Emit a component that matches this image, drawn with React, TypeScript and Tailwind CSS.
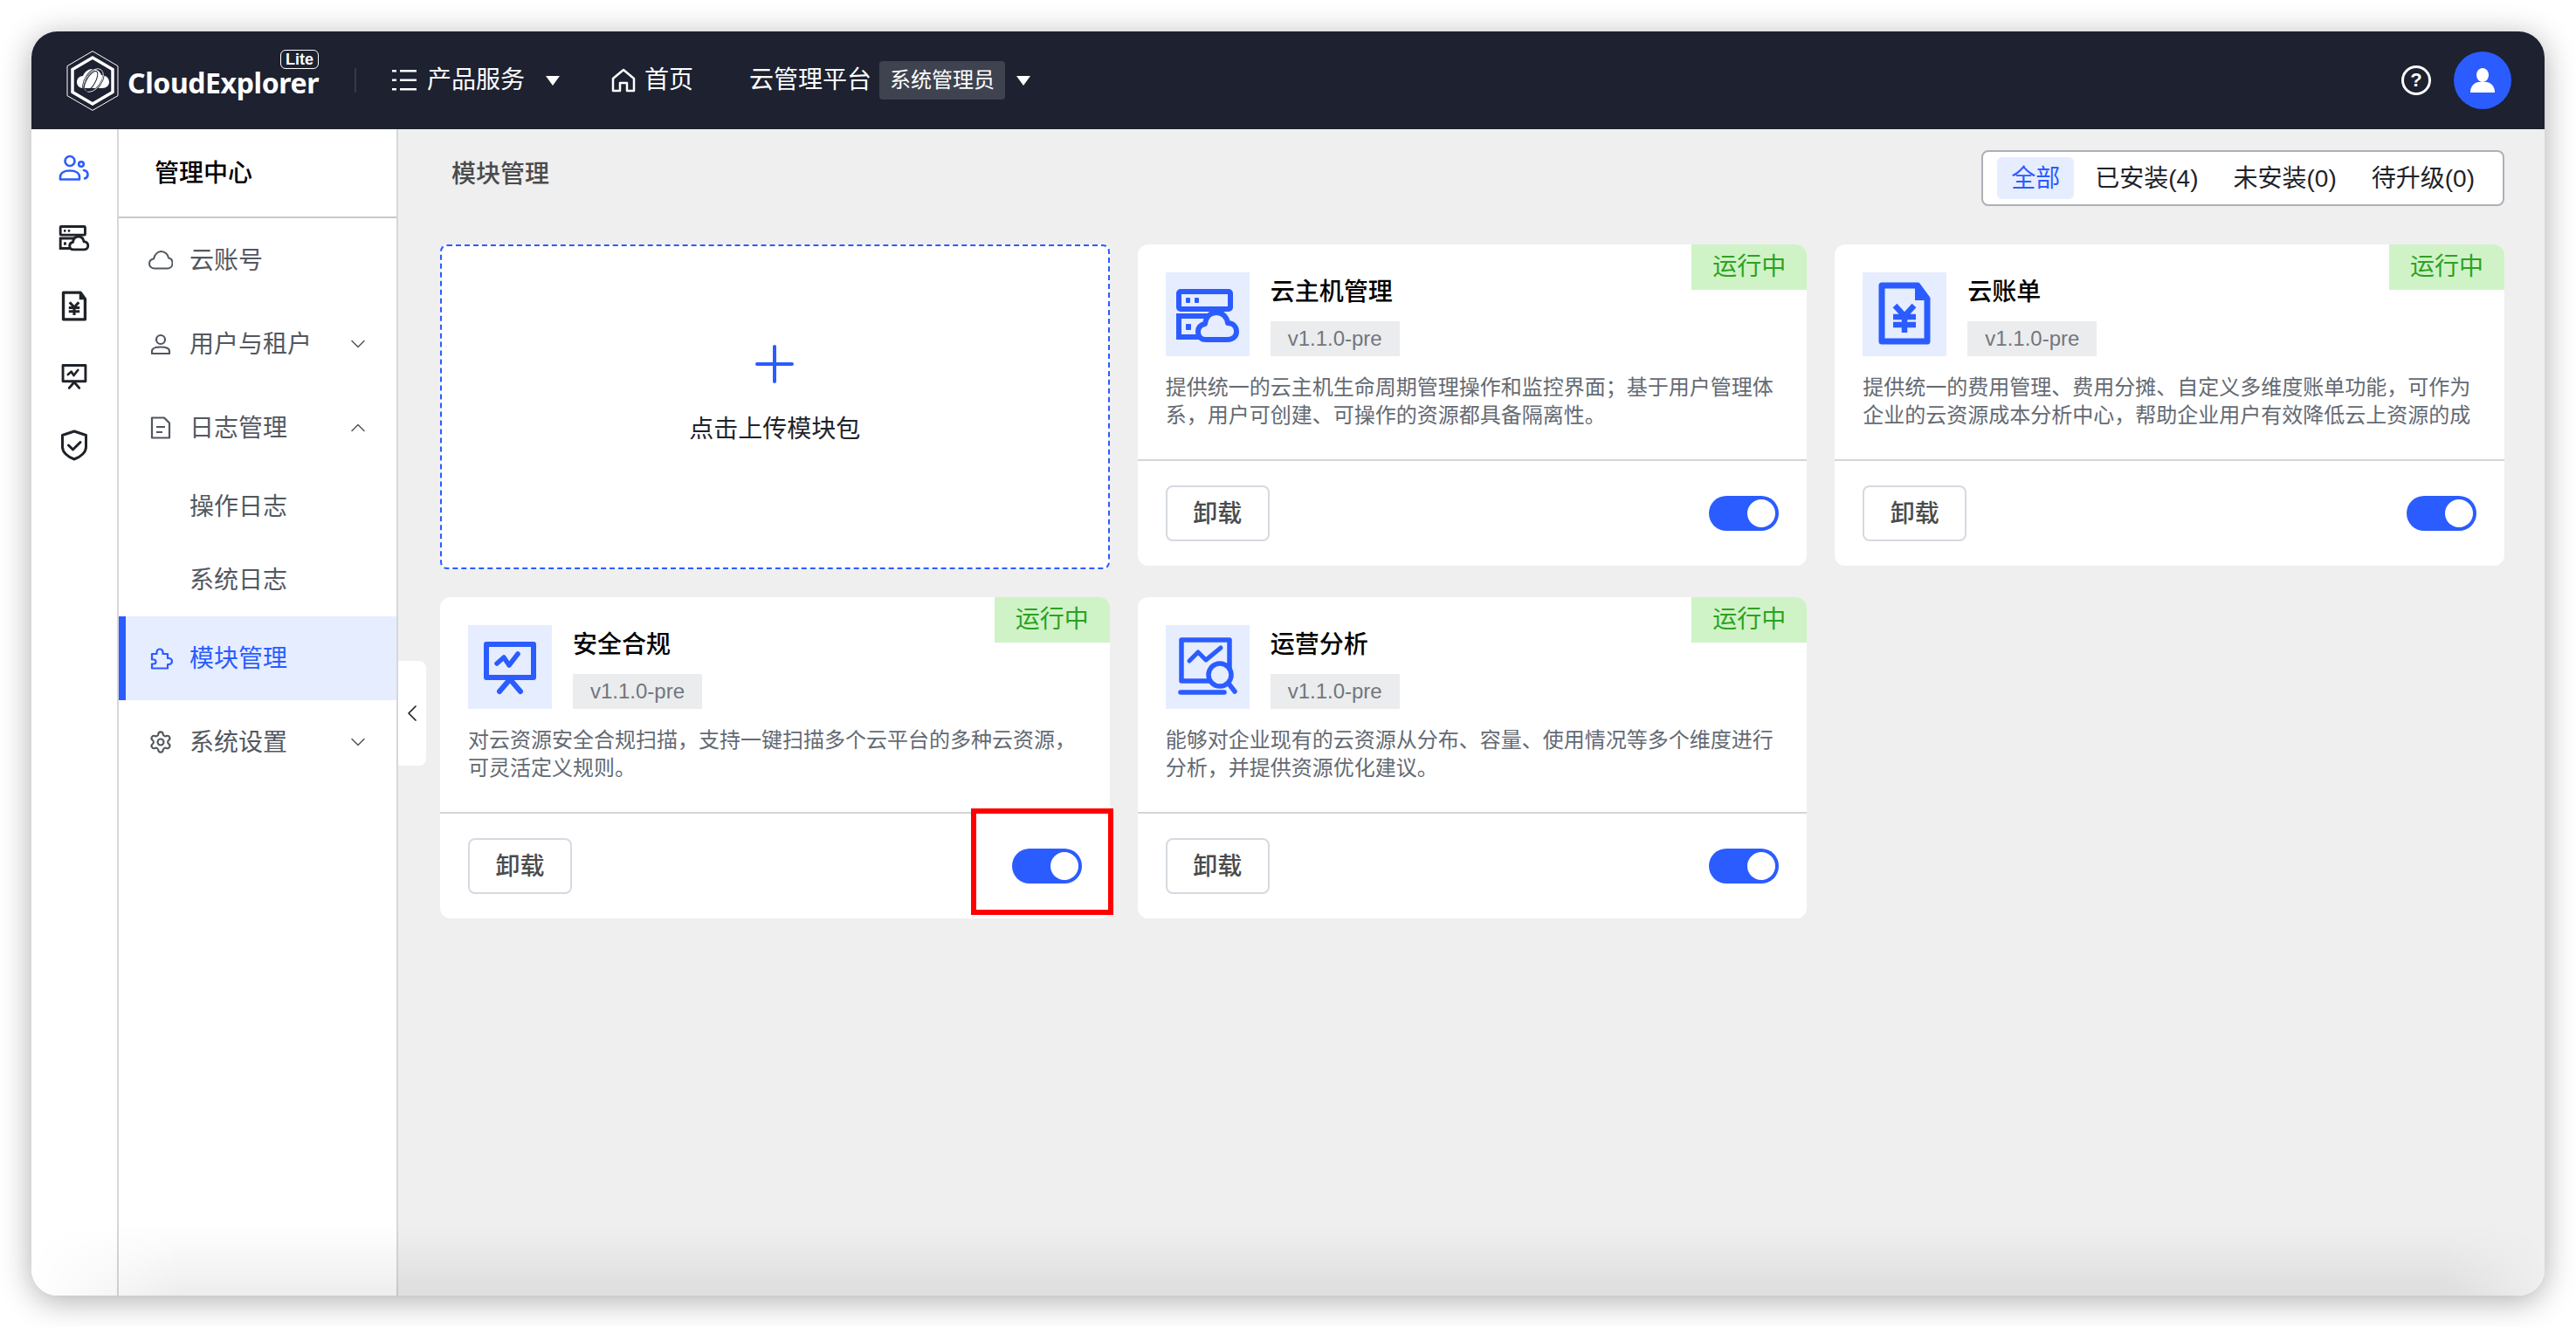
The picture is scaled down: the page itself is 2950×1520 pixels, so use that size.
import { ChevronDown, ChevronLeft, ChevronUp, Settings } from "lucide-react";
import type { ReactNode } from "react";

const BLUE = "#2b5cff";
const ICON_BG = "#e6edff";

type IconProps = { color: string; bg: string };

function ServerCloudIcon({ color, bg }: IconProps) {
    return (
        <svg width="46" height="46" viewBox="0 0 96 96" fill="none" className="h-full w-full">
            <rect x="15" y="22" width="59" height="20" rx="2" stroke={color} strokeWidth="6" />
            <rect x="23" y="29" width="5" height="6" rx="1" fill={color} />
            <rect x="33" y="29" width="5" height="6" rx="1" fill={color} />
            <path d="M48 50H15v24h34" stroke={color} strokeWidth="6" />
            <rect x="23" y="59" width="6" height="7" rx="1" fill={color} />
            <path
                d="M46 77c-6 0-9-4-9-9 0-5 3-8 8-9 1-8 6-13 13-13s12 5 13 12c6 0 10 4 10 10 0 5-4 9-10 9H46z"
                fill={bg}
                stroke={color}
                strokeWidth="6"
                strokeLinejoin="round"
            />
        </svg>
    );
}

function BillIcon({ color, bg }: IconProps) {
    return (
        <svg width="46" height="46" viewBox="0 0 96 96" fill="none" className="h-full w-full">
            <path d="M22 15h41l11 15v49H22V15z" fill={bg} stroke={color} strokeWidth="7" strokeLinejoin="round" />
            <path d="M60 13v19h16z" fill={color} />
            <path d="M37 38l11 12 11-12M48 50v19M35 51h26M35 60h26" stroke={color} strokeWidth="6.500" />
        </svg>
    );
}

function PresentationIcon({ color }: IconProps) {
    return (
        <svg width="46" height="46" viewBox="0 0 96 96" fill="none" className="h-full w-full">
            <rect x="21" y="22" width="54" height="38" stroke={color} strokeWidth="6" strokeLinejoin="round" />
            <path d="M33 44l8-7 6 9 10-13" stroke={color} strokeWidth="5.500" strokeLinecap="round" strokeLinejoin="round" />
            <path d="M48 62L36 76M48 62l12 14" stroke={color} strokeWidth="6" strokeLinecap="round" />
        </svg>
    );
}

function AnalysisIcon({ color, bg }: IconProps) {
    return (
        <svg width="46" height="46" viewBox="0 0 96 96" fill="none" className="h-full w-full">
            <path d="M73 50V17H18v47h32" stroke={color} strokeWidth="5.500" strokeLinejoin="round" />
            <path d="M27 41l10-10 9 9 17-14" stroke={color} strokeWidth="5" strokeLinecap="round" strokeLinejoin="round" />
            <circle cx="62" cy="57" r="13" fill={bg} stroke={color} strokeWidth="5.500" />
            <path d="M72 67l7 9" stroke={color} strokeWidth="5.500" strokeLinecap="round" />
            <path d="M17 77h50" stroke={color} strokeWidth="5.500" strokeLinecap="round" />
        </svg>
    );
}

function Logo() {
    return (
        <svg width="60" height="69" viewBox="0 0 60 69" fill="none">
            <path d="M30 .6l29 17v34l-29 16.800-29-16.800v-34z" stroke="white" strokeWidth="1" />
            <path d="M30 8l23 13.500v26L30 61 7 47.500v-26z" stroke="white" strokeWidth="3.500" />
            <path
                d="M19 43c-4 0-7-3-7-7 0-4 3-7 7-7 2-5 6-8 11-8 5 0 9 3 10 7 5 0 9 3 9 8 0 4-3 7-8 7H19z"
                fill="white"
            />
            <ellipse cx="31" cy="34" rx="9" ry="16" transform="rotate(35 31 34)" stroke="#1d2130" strokeWidth="2" />
            <ellipse cx="31" cy="34" rx="9" ry="15" transform="rotate(35 31 34)" stroke="white" strokeWidth=".8" />
            <ellipse cx="28" cy="35" rx="5" ry="13" transform="rotate(30 28 35)" stroke="#1d2130" strokeWidth="1" />
        </svg>
    );
}

function Caret() {
    return <span className="block h-0 w-0 border-x-[8px] border-t-[11px] border-x-transparent border-t-white" />;
}

function MenuListIcon() {
    return (
        <svg width="28" height="24" viewBox="0 0 28 24" fill="white" className="block">
            <rect x="0" y="0" width="5" height="2.500" />
            <rect x="9" y="0" width="19" height="2.500" />
            <rect x="0" y="10.500" width="5" height="2.500" />
            <rect x="9" y="10.500" width="19" height="2.500" />
            <rect x="0" y="21" width="5" height="2.500" />
            <rect x="9" y="21" width="19" height="2.500" />
        </svg>
    );
}

function HomeIcon() {
    return (
        <svg width="28" height="28" viewBox="0 0 28 28" fill="none" stroke="white" strokeWidth="2.500" strokeLinejoin="round" className="block">
            <path d="M2 12L14 2l12 10v14h-8v-9h-8v9H2z" />
        </svg>
    );
}

function CloudIcon() {
    return (
        <svg width="28" height="22" viewBox="0 0 28 22" fill="none" stroke="#51565f" strokeWidth="2" strokeLinejoin="round">
            <path d="M7 20.500C3.500 20.500 1 18 1 15c0-3 2-5 5-5.500C7 4.500 10.500 1 14.500 1c4.500 0 8 3.500 8.500 7.500 2.800.5 4.500 3 4.500 6 0 3.500-2.500 6-6 6z" />
        </svg>
    );
}

function UserIcon() {
    return (
        <svg width="24" height="24" viewBox="0 0 24 24" fill="none" stroke="#51565f" strokeWidth="2.200">
            <circle cx="12" cy="7" r="5" />
            <path d="M2 23v-3c0-2.500 3-4.500 10-4.500s10 2 10 4.500v3z" strokeLinejoin="round" />
        </svg>
    );
}

function FileIcon() {
    return (
        <svg width="24" height="26" viewBox="0 0 24 26" fill="none" stroke="#51565f" strokeWidth="2.200">
            <path d="M2 1.500h14l6 6v17H2z" strokeLinejoin="round" />
            <path d="M7 12h10M7 18h7" />
        </svg>
    );
}

function PuzzleIcon() {
    return (
        <svg width="27" height="26" viewBox="0 0 27 26" fill="none" stroke={BLUE} strokeWidth="2.200" strokeLinejoin="round">
            <path d="M3 8h5.500V6a3.500 3.500 0 0 1 7 0v2H21v5h1.500a3.500 3.500 0 0 1 0 7H21v4.500H3v-5h2a2.500 2.500 0 0 0 0-5H3z" />
        </svg>
    );
}

function UsersRailIcon() {
    return (
        <svg width="36" height="30" viewBox="0 0 36 30" fill="none" stroke={BLUE} strokeWidth="2.600">
            <circle cx="13" cy="7.500" r="5.500" />
            <path d="M2 28.500v-3c0-4 4-7 11-7s11 3 11 7v3z" strokeLinejoin="round" />
            <circle cx="26" cy="11" r="2.800" />
            <path d="M29 18c3 .5 4.500 2.500 4.500 5s-1.500 4-3.500 4.500" strokeLinecap="round" />
        </svg>
    );
}

function ShieldIcon() {
    return (
        <svg width="32" height="36" viewBox="0 0 32 36" fill="none" stroke="#1f2329" strokeWidth="3">
            <path d="M16 2l13.500 4.500V20c0 6-6 11.500-13.500 14C8.500 31.500 2.500 26 2.500 20V6.500z" strokeLinejoin="round" />
            <path d="M9.500 18l5 5 8.500-8.500" strokeLinecap="round" strokeLinejoin="round" />
        </svg>
    );
}

function TopBar() {
    return (
        <header className="flex h-[112px] shrink-0 items-center bg-[#1d2130] pl-[40px] pr-[38px] text-[28px] text-white">
            <Logo />
            <div className="relative ml-[10px] w-[220px] pt-[6px]">
                <span className="block text-[32px] font-bold leading-[40px] tracking-[-0.4px] [font-family:'Noto_Sans',sans-serif]">
                    CloudExplorer
                </span>
                <span className="absolute right-[1px] top-[-12px] rounded-[6px] border-[1.500px] border-white px-[5px] text-[18px] font-bold leading-[20px]">
                    Lite
                </span>
            </div>
            <span className="ml-[40px] h-[28px] w-[2px] bg-[#353947]" />
            <span className="ml-[41px]"><MenuListIcon /></span>
            <span className="ml-[12px] leading-[40px]">产品服务</span>
            <span className="ml-[24px]"><Caret /></span>
            <span className="ml-[59px]"><HomeIcon /></span>
            <span className="ml-[10px] leading-[40px]">首页</span>
            <span className="ml-[64px] leading-[40px]">云管理平台</span>
            <span className="ml-[9px] flex h-[44px] w-[144px] items-center justify-center rounded-[4px] bg-[#3f4350] text-[24px]">
                系统管理员
            </span>
            <span className="ml-[13px]"><Caret /></span>
            <div className="ml-auto flex items-center gap-[26px]">
                <span className="flex h-[34px] w-[34px] items-center justify-center rounded-full border-[3px] border-white text-[22px] font-bold leading-none">
                    ?
                </span>
                <span className="flex h-[66px] w-[66px] items-center justify-center rounded-full bg-[#2b5cff]">
                    <svg width="28" height="28" viewBox="0 0 28 28" fill="white">
                        <ellipse cx="14" cy="8" rx="7" ry="8" />
                        <path d="M0 28c0-7 4-11 9-12h10c5 1 9 5 9 12z" />
                    </svg>
                </span>
            </div>
        </header>
    );
}

function IconRail() {
    return (
        <nav className="flex w-[100px] shrink-0 flex-col items-center gap-[33.500px] border-r-2 border-[#d5d7de] bg-white pt-[21px]">
            <span className="flex h-[46px] w-[46px] items-center justify-center"><UsersRailIcon /></span>
            <span className="h-[46px] w-[46px]"><ServerCloudIcon color="#1f2329" bg="#ffffff" /></span>
            <span className="h-[46px] w-[46px]"><BillIcon color="#1f2329" bg="#ffffff" /></span>
            <span className="h-[46px] w-[46px]"><PresentationIcon color="#1f2329" bg="#ffffff" /></span>
            <span className="flex h-[46px] w-[46px] items-center justify-center"><ShieldIcon /></span>
        </nav>
    );
}

type NavItem = {
    label: string;
    icon?: ReactNode;
    arrow?: "up" | "down";
    active?: boolean;
    sub?: boolean;
};

const NAV_ITEMS: NavItem[] = [
    { label: "云账号", icon: <CloudIcon /> },
    { label: "用户与租户", icon: <UserIcon />, arrow: "down" },
    { label: "日志管理", icon: <FileIcon />, arrow: "up" },
    { label: "操作日志", sub: true },
    { label: "系统日志", sub: true },
    { label: "模块管理", icon: <PuzzleIcon />, active: true },
    { label: "系统设置", icon: <Settings size={28} strokeWidth={1.800} />, arrow: "down" },
];

function SideMenu() {
    return (
        <aside className="w-[320px] shrink-0 border-r-2 border-[#d5d7de] bg-white">
            <div className="flex h-[102px] items-center border-b-2 border-[#c8c8c8] pl-[41px] pt-[2px] text-[28px] font-medium text-black">
                管理中心
            </div>
            {NAV_ITEMS.map((item) => (
                <div
                    key={item.label}
                    className={`flex items-center text-[28px] ${item.sub ? "h-[84px]" : "h-[96px]"} ${
                        item.active
                            ? "border-l-8 border-[#2b5cff] bg-[#e6edff] pl-[26px] text-[#2b5cff]"
                            : "pl-[34px] text-[#53585f]"
                    }`}
                >
                    <span className={`flex w-[28px] justify-center ${item.active ? "" : "text-[#51565f]"}`}>{item.icon}</span>
                    <span className="ml-[19px] pt-[2px]">{item.label}</span>
                    {item.arrow === "down" && (
                        <ChevronDown size={28} strokeWidth={1.300} className="ml-auto mr-[30px] text-[#53585f]" />
                    )}
                    {item.arrow === "up" && (
                        <ChevronUp size={28} strokeWidth={1.300} className="ml-auto mr-[30px] text-[#53585f]" />
                    )}
                </div>
            ))}
        </aside>
    );
}

const TABS = ["全部", "已安装(4)", "未安装(0)", "待升级(0)"];

function Tabs() {
    return (
        <div className="flex h-[64px] items-center gap-[8px] rounded-[8px] border-2 border-[#adb0b8] bg-white pl-[16px] pr-[16px] text-[28px] text-[#1f2329]">
            {TABS.map((tab, i) => (
                <span
                    key={tab}
                    className={`flex h-[48px] items-center rounded-[6px] px-[16px] pt-[2px] ${i === 0 ? "bg-[#e6edff] text-[#2b5cff]" : ""}`}
                >
                    {tab}
                </span>
            ))}
        </div>
    );
}

type Module = {
    name: string;
    desc: string;
    Icon: (props: IconProps) => ReactNode;
    highlighted?: boolean;
};

const MODULES: Module[] = [
    {
        name: "云主机管理",
        desc: "提供统一的云主机生命周期管理操作和监控界面；基于用户管理体系，用户可创建、可操作的资源都具备隔离性。",
        Icon: ServerCloudIcon,
    },
    {
        name: "云账单",
        desc: "提供统一的费用管理、费用分摊、自定义多维度账单功能，可作为企业的云资源成本分析中心，帮助企业用户有效降低云上资源的成",
        Icon: BillIcon,
    },
    {
        name: "安全合规",
        desc: "对云资源安全合规扫描，支持一键扫描多个云平台的多种云资源，可灵活定义规则。",
        Icon: PresentationIcon,
        highlighted: true,
    },
    {
        name: "运营分析",
        desc: "能够对企业现有的云资源从分布、容量、使用情况等多个维度进行分析，并提供资源优化建议。",
        Icon: AnalysisIcon,
    },
];

function ModuleCard({ module }: { module: Module }) {
    const { name, desc, Icon, highlighted } = module;
    return (
        <div className="relative h-[368px] rounded-[12px] bg-white">
            <span className="absolute right-0 top-0 flex h-[52px] w-[132px] items-center justify-center rounded-tr-[12px] bg-[#cff3c6] text-[28px] text-[#2ea121]">
                运行中
            </span>
            <div className="h-[248px] border-b-2 border-[#d5d5d5] px-[32px] pt-[32px]">
                <div className="flex gap-[24px]">
                    <div className="h-[96px] w-[96px] shrink-0 bg-[#e6edff]">
                        <Icon color={BLUE} bg={ICON_BG} />
                    </div>
                    <div>
                        <div className="pt-[2px] text-[28px] font-medium leading-[42px] text-black">{name}</div>
                        <span className="mt-[12px] flex h-[40px] w-[148px] items-center justify-center bg-[#ebecee] text-[24px] text-[#73767c]">
                            v1.1.0-pre
                        </span>
                    </div>
                </div>
                <p className="mt-[20px] h-[64px] overflow-hidden text-[24px] leading-[32px] text-[#646a73]">{desc}</p>
            </div>
            <div className="flex h-[120px] items-center justify-between pl-[32px] pr-[32px]">
                <button className="h-[64px] w-[119px] rounded-[8px] border-2 border-[#d6d9e0] pt-[2px] text-[28px] font-medium text-[#4b4b4b]">
                    卸载
                </button>
                <span className="flex h-[40px] w-[80px] items-center justify-end rounded-full bg-[#2b5cff] pr-[4px]">
                    <span className="h-[32px] w-[32px] rounded-full bg-white" />
                </span>
            </div>
            {highlighted && (
                <div className="absolute left-[608px] top-[242px] h-[122px] w-[163px] border-[6px] border-[#ff0000]" />
            )}
        </div>
    );
}

function UploadCard() {
    return (
        <div className="flex h-[372px] flex-col items-center rounded-[8px] border-2 border-dashed border-[#2b5cff] bg-white pt-[113px]">
            <svg width="44" height="44" viewBox="0 0 44 44" stroke={BLUE} strokeWidth="4" strokeLinecap="round">
                <path d="M22 2v40M2 22h40" />
            </svg>
            <span className="mt-[33px] text-[28px] leading-[40px] text-[#1f2329]">点击上传模块包</span>
        </div>
    );
}

export default function App() {
    return (
        <div className="h-[1520px] w-[2950px] bg-white p-[36px] [font-family:'Liberation_Sans','Noto_Sans_CJK_SC',sans-serif]">
            <div className="relative flex h-[1448px] w-[2878px] flex-col overflow-hidden rounded-[30px] shadow-[0_6px_36px_rgba(0,0,0,0.32)]">
                <TopBar />
                <div className="flex min-h-0 flex-1">
                    <IconRail />
                    <SideMenu />
                    <main className="relative min-w-0 flex-1 bg-[#efefef] pl-[48px] pr-[46px] pt-[24px]">
                        <div className="flex items-start justify-between">
                            <h1 className="pl-[13px] pt-[2px] text-[28px] font-medium leading-[52px] text-[#4b4b4b]">模块管理</h1>
                            <Tabs />
                        </div>
                        <div className="mt-[44px] grid grid-cols-3 items-start gap-[32px]">
                            <UploadCard />
                            {MODULES.map((m) => (
                                <ModuleCard key={m.name} module={m} />
                            ))}
                        </div>
                        {/* collapse handle */}
                        <div className="absolute left-0 top-[609px] flex h-[120px] w-[32px] items-center justify-center rounded-r-[8px] bg-white">
                            <ChevronLeft size={32} strokeWidth={1.300} className="text-[#1f2329]" />
                        </div>
                    </main>
                </div>
                {/* window bottom shade */}
                <div className="pointer-events-none absolute inset-x-0 bottom-0 h-[80px] bg-gradient-to-t from-black/[0.07] to-transparent [mask-image:linear-gradient(to_right,transparent_0%,black_6%,black_96%,transparent_100%)]" />
            </div>
        </div>
    );
}
